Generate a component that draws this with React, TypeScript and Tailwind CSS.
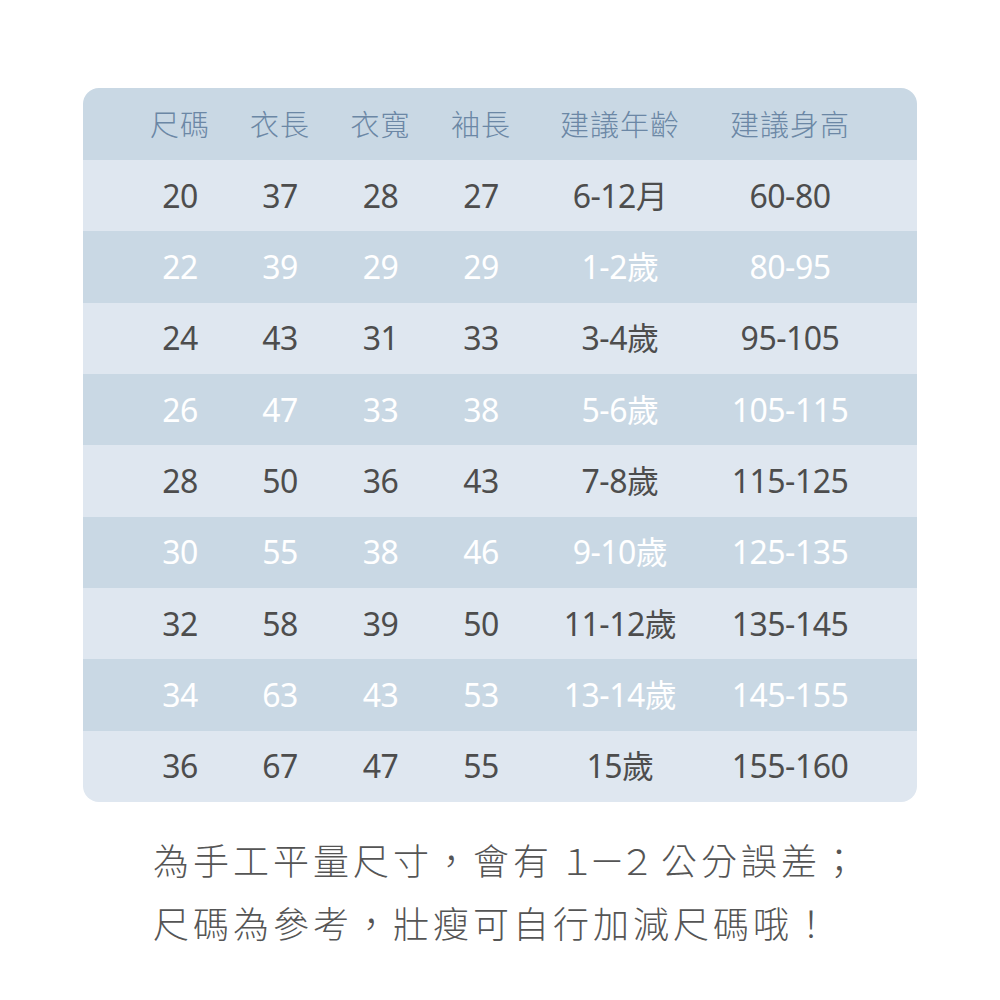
import React from "react";

const headers = ["尺碼", "衣長", "衣寬", "袖長", "建議年齡", "建議身高"];
const rows: string[][] = [
  ["20", "37", "28", "27", "6-12月", "60-80"],
  ["22", "39", "29", "29", "1-2歲", "80-95"],
  ["24", "43", "31", "33", "3-4歲", "95-105"],
  ["26", "47", "33", "38", "5-6歲", "105-115"],
  ["28", "50", "36", "43", "7-8歲", "115-125"],
  ["30", "55", "38", "46", "9-10歲", "125-135"],
  ["32", "58", "39", "50", "11-12歲", "135-145"],
  ["34", "63", "43", "53", "13-14歲", "145-155"],
  ["36", "67", "47", "55", "15歲", "155-160"],
];

const cols = "grid grid-cols-[47px_100px_100px_101px_100px_178px_162px_1fr] items-center";

export default function App() {
  return (
    <div className="w-[1000px] h-[1000px] bg-white flex flex-col items-center pt-[88px]" style={{ fontFamily: '"Noto Sans", "Noto Sans CJK TC", sans-serif' }}>
      <div className="w-[834px] rounded-[16px] overflow-hidden flex flex-col">
        <div className={`${cols} h-[72px] bg-[#c9d8e4] text-[#6b87a5] text-[29px] font-light`} style={{ fontFamily: '"Noto Sans CJK TC", sans-serif' }}>
          <div />
          {headers.map((h) => (
            <div key={h} className="text-center tracking-[1px]">{h}</div>
          ))}
          <div />
        </div>
        {rows.map((r, i) => (
          <div
            key={i}
            className={`${cols} h-[71.33px] text-[32px] tracking-[-0.5px] ${i % 2 === 0 ? "bg-[#dfe7f0] text-[#4d4d4d]" : "bg-[#c9d8e4] text-white"}`}
          >
            <div />
            {r.map((c, j) => (
              <div key={j} className="text-center leading-none">{c}</div>
            ))}
            <div />
          </div>
        ))}
      </div>
      <div
        className="mt-[26px] w-[834px] pl-[70px] text-[36px] leading-[63px] tracking-[4px] text-[#555555] font-light whitespace-nowrap"
        style={{ fontFamily: '"Noto Sans CJK TC", sans-serif' }}
      >
        <div>
          為手工平量尺寸，會有
          <span className="tracking-[-6px] pl-[6px] pr-[12px]">１－２</span>
          公分誤差；
        </div>
        <div>尺碼為參考，壯瘦可自行加減尺碼哦！</div>
      </div>
    </div>
  );
}
